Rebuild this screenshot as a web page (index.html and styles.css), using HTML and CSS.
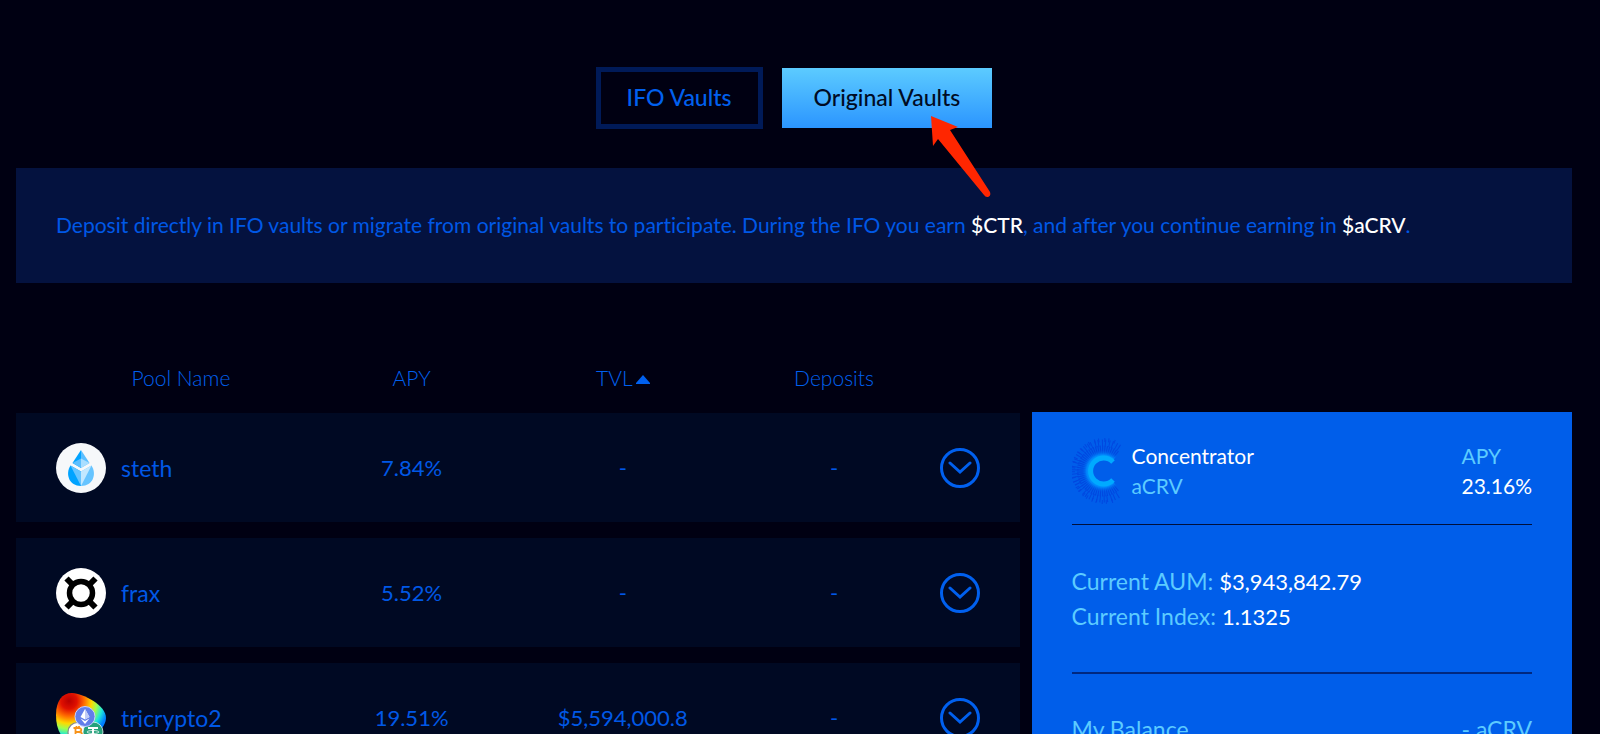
FILE: index.html
```html
<!DOCTYPE html>
<html lang="en">
<head>
    <meta charset="UTF-8">
    <meta name="viewport" content="width=device-width, initial-scale=1.0">
    <title>Concentrator - Vaults</title>
    <link rel="stylesheet" href="styles.css">
</head>
<body>

    <nav class="tabs">
        <button type="button" class="tab">IFO Vaults</button>
        <div class="tab-wrap">
            <button type="button" class="tab active">Original Vaults</button>
            <svg class="pointer" width="62" height="82" viewBox="0 0 62 82" aria-hidden="true">
                <path fill="#ff2600" d="M0 0 L27 11 L19 14 L59 76 Q60 79 58 80.500 Q55 82 53 79 L7 23 L2 30 Z"/>
            </svg>
        </div>
    </nav>

    <p class="banner">Deposit directly in IFO vaults or migrate from original vaults to participate. During the IFO you earn <strong>$CTR</strong>, and after you continue earning in <strong>$aCRV</strong>.</p>

    <main class="content">
        <table class="pools">
            <thead>
                <tr>
                    <th class="col-name">Pool Name</th>
                    <th>APY</th>
                    <th>TVL<svg class="sort" width="14" height="9" viewBox="0 0 14 9" aria-hidden="true"><path fill="#0060ef" d="M7 0 L14 8 V9 H0 V8 Z"/></svg></th>
                    <th>Deposits</th>
                    <th class="col-toggle"></th>
                </tr>
            </thead>
            <tbody>
                <tr>
                    <td>
                        <div class="pool">
                            <svg width="50" height="50" viewBox="0 0 50 50" aria-hidden="true">
                                <circle cx="25" cy="25" r="25" fill="#f6f8fa"/>
                                <path fill="#00a3ff" d="M25 7 L16.500 20 L25 25 Z"/>
                                <path fill="#5cbfff" d="M25 7 L33.500 20 L25 25 Z"/>
                                <path fill="#5cbfff" d="M16.500 20 L25 15.500 V25 Z"/>
                                <path fill="#a9deff" d="M33.500 20 L25 15.500 V25 Z"/>
                                <path fill="#00a3ff" d="M14.500 22.500 L25 28.500 V43 C13 43 9 31 14.500 22.500 Z"/>
                                <path fill="#66c4ff" d="M35.500 22.500 L25 28.500 V43 C37 43 41 31 35.500 22.500 Z"/>
                                <path fill="#66c4ff" d="M14.500 22.500 L25 28.500 V43 Z"/>
                                <path fill="#c2e8ff" d="M35.500 22.500 L25 28.500 V43 Z"/>
                            </svg>
                            <span>steth</span>
                        </div>
                    </td>
                    <td>7.84%</td>
                    <td>-</td>
                    <td>-</td>
                    <td>
                        <button type="button" class="toggle" aria-label="Expand steth">
                            <svg width="24" height="14" viewBox="0 0 24 14"><path d="M2 2 L12 11 L22 2"/></svg>
                        </button>
                    </td>
                </tr>
                <tr>
                    <td>
                        <div class="pool">
                            <svg width="50" height="50" viewBox="0 0 50 50" aria-hidden="true">
                                <circle cx="25" cy="25" r="25" fill="#fff"/>
                                <circle cx="25" cy="25" r="11.500" fill="none" stroke="#000" stroke-width="5.500"/>
                                <path stroke="#000" stroke-width="6" d="M10.500 10.500 L17 17 M39.500 10.500 L33 17 M10.500 39.500 L17 33 M39.500 39.500 L33 33"/>
                            </svg>
                            <span>frax</span>
                        </div>
                    </td>
                    <td>5.52%</td>
                    <td>-</td>
                    <td>-</td>
                    <td>
                        <button type="button" class="toggle" aria-label="Expand frax">
                            <svg width="24" height="14" viewBox="0 0 24 14"><path d="M2 2 L12 11 L22 2"/></svg>
                        </button>
                    </td>
                </tr>
                <tr>
                    <td>
                        <div class="pool">
                            <svg width="50" height="50" viewBox="0 0 50 50" aria-hidden="true">
                                <defs>
                                    <radialGradient id="crv" gradientUnits="userSpaceOnUse" cx="13" cy="8" r="40">
                                        <stop offset="0" stop-color="#b80000"/>
                                        <stop offset="0.200" stop-color="#e01000"/>
                                        <stop offset="0.380" stop-color="#ff6a00"/>
                                        <stop offset="0.560" stop-color="#ffd800"/>
                                        <stop offset="0.700" stop-color="#9dff50"/>
                                        <stop offset="0.850" stop-color="#20e8d8"/>
                                        <stop offset="1" stop-color="#0080ff"/>
                                    </radialGradient>
                                </defs>
                                <path fill="url(#crv)" d="M0 22 C0 8 6 0 16 0 C28 1 50 12 50 25 C50 34 36 50 22 50 C8 50 0 40 0 22 Z"/>
                                <circle cx="21.500" cy="39" r="9.500" fill="#fff" stroke="#888" stroke-width="1.200"/>
                                <path fill="none" stroke="#f7931a" stroke-width="1.800" d="M17.500 35 H22.500 C26.500 35 26 39 22.500 39 H19.500 M22.500 39 C27.500 39 27 43.500 23 43.500 H17.500 M19.500 35 V43.500 M20.500 33 V35 M23 33 V35"/>
                                <circle cx="37" cy="39" r="10" fill="#26a17b" stroke="#e8f5f0" stroke-width="0.800"/>
                                <path fill="none" stroke="#fff" stroke-width="2" d="M32 35 H42 M37 35 V46"/>
                                <ellipse cx="37" cy="39" rx="6" ry="1.500" fill="none" stroke="#fff" stroke-width="0.800"/>
                                <circle cx="29" cy="23.500" r="10" fill="#627eea" stroke="#c5d0ff" stroke-width="1"/>
                                <path fill="#fff" d="M29 16 L24.500 24 L29 26.500 L33.500 24 Z M24.500 25.500 L29 31 L33.500 25.500 L29 28 Z"/>
                                <path fill="#c0cbf6" d="M29 16 L33.500 24 L29 26.500 Z"/>
                            </svg>
                            <span>tricrypto2</span>
                        </div>
                    </td>
                    <td>19.51%</td>
                    <td>$5,594,000.8</td>
                    <td>-</td>
                    <td>
                        <button type="button" class="toggle" aria-label="Expand tricrypto2">
                            <svg width="24" height="14" viewBox="0 0 24 14"><path d="M2 2 L12 11 L22 2"/></svg>
                        </button>
                    </td>
                </tr>
            </tbody>
        </table>

        <aside class="panel">
            <div class="panel-head">
                <svg class="logo" width="50" height="66" viewBox="0 0 50 66" aria-hidden="true">
                    <defs>
                        <radialGradient id="glow" gradientUnits="userSpaceOnUse" cx="31" cy="33" r="21">
                            <stop offset="0.600" stop-color="#00aaff"/>
                            <stop offset="0.780" stop-color="#0090ff" stop-opacity="0.800"/>
                            <stop offset="1" stop-color="#0060ee" stop-opacity="0"/>
                        </radialGradient>
                    </defs>
                    <g fill="none" stroke="#0048e0">
                        <path stroke-width="9" stroke-dasharray="1 1" d="M44 17 A21 21 0 1 0 44 49"/>
                        <path stroke-width="7" stroke-dasharray="1 2 1 3" d="M47 10 A28 28 0 1 0 47 56"/>
                        <path stroke-width="4" stroke-dasharray="1 5 1 3" d="M43 4 A31 31 0 1 0 43 62"/>
                    </g>
                    <path fill="none" stroke="url(#glow)" stroke-width="11" d="M43 20 A18 18 0 1 0 43 46"/>
                    <path fill="none" stroke="#00aaff" stroke-width="5" d="M41 24 A13 13 0 1 0 41 42"/>
                </svg>
                <div class="title">
                    <div class="value">Concentrator</div>
                    <div>aCRV</div>
                </div>
                <div>
                    <div>APY</div>
                    <div class="value">23.16%</div>
                </div>
            </div>
            <div class="stats">
                <div>Current AUM: <span class="value">$3,943,842.79</span></div>
                <div>Current Index: <span class="value">1.1325</span></div>
            </div>
            <div class="balance">
                <span>My Balance</span>
                <span>- aCRV</span>
            </div>
        </aside>
    </main>

</body>
</html>
```
FILE: styles.css
```css
* { box-sizing: border-box; }
body {
    margin: 0;
    height: 100vh;
    overflow: hidden;
    padding: 67px 28px 0 16px;
    background: #000012;
    color: #0058e6;
    font-family: Lato, "Open Sans", sans-serif;
    font-size: 23px;
    font-variant-ligatures: none;
}
button { font-family: inherit; cursor: pointer; }

.tabs { display: flex; justify-content: center; align-items: center; gap: 19px; }
.tab {
    height: 62px;
    padding: 0 26px 2px;
    border: 5px solid #001a58;
    background: transparent;
    color: #0060ef;
    font-size: 23px;
    font-weight: 500;
}
.tab.active {
    height: 60px;
    padding: 0 32px 2px;
    border: 0;
    background: linear-gradient(#5ccbff, #2b95ff);
    color: #000b24;
}
.tab-wrap { position: relative; display: flex; }
.pointer { position: absolute; left: 149px; top: 48px; pointer-events: none; }

.banner {
    margin: 39px 0 0;
    padding: 42px 40px 43px;
    background: #04123f;
    font-size: 21px;
    line-height: 30px;
}
.banner strong { color: #fff; font-weight: 500; }

.content {
    display: grid;
    grid-template-columns: 65fr 35fr;
    align-items: start;
    gap: 12px;
    margin-top: 64px;
}

.pools {
    width: 100%;
    table-layout: fixed;
    border-collapse: separate;
    border-spacing: 0 16px;
}
.pools th { height: 34px; padding: 0 0 6px; color: #0060ef; font-size: 21px; font-weight: 300; }
.pools .col-name { width: 290px; padding-left: 40px; }
.pools .col-toggle { width: 80px; }
.pools td { height: 109px; padding: 0; background: #000923; font-size: 22px; text-align: center; }
.pools td:first-child { padding-left: 40px; font-size: 23px; }
.pools td:last-child { text-align: left; }
.sort { margin-left: 3px; vertical-align: 2px; }
.pool { display: flex; align-items: center; gap: 15px; }
.toggle {
    display: flex;
    align-items: center;
    justify-content: center;
    width: 40px;
    height: 40px;
    padding: 0;
    border: 3px solid #0060ef;
    border-radius: 50%;
    background: none;
}
.toggle path { fill: none; stroke: #0060ef; stroke-width: 3; stroke-linecap: round; }

.panel {
    margin-top: 65px;
    padding: 25px 40px 40px;
    background: #005eea;
    color: #5ccbff;
}
.panel .value { color: #fff; }
.panel-head {
    display: flex;
    align-items: center;
    height: 88px;
    padding-bottom: 20px;
    border-bottom: 1px solid #00103c;
    font-size: 21px;
    line-height: 30px;
}
.title { flex: 1; padding-left: 10px; }
.stats { height: 149px; padding-top: 39px; border-bottom: 2px solid #002880; line-height: 34px; }
.stats .value { font-size: 22px; }
.balance { display: flex; justify-content: space-between; padding-top: 38px; line-height: 34px; }
```
